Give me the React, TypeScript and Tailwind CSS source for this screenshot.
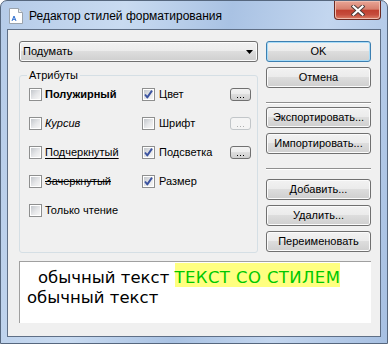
import React from 'react';

const btnBg = 'bg-[linear-gradient(to_bottom,#f2f2f2_0%,#ebebeb_49%,#dddddd_50%,#cfcfcf_100%)]';

function Button({ label, isDefault = false, className = '' }: { label: string; isDefault?: boolean; className?: string }) {
  return (
    <div
      className={`flex h-[21px] items-center justify-center rounded-[3px] border text-[11px] leading-none text-black ${btnBg} ${
        isDefault ? 'border-[#3c7fb1] shadow-[inset_0_0_0_1px_#a8dcf8]' : 'border-[#707070] shadow-[inset_0_0_0_1px_#fbfbfb]'
      } ${className}`}
    >
      {label}
    </div>
  );
}

function DotsButton({ disabled = false }: { disabled?: boolean }) {
  return (
    <div
      className={`flex h-[13px] w-[21px] items-end justify-center rounded-[3px] border pb-[2px] ${
        disabled ? 'border-[#c2c6c9] bg-[#f4f4f4]' : `border-[#707070] ${btnBg}`
      }`}
    >
      <div className="flex gap-[2px]">
        {[0, 1, 2].map((i) => (
          <span key={i} className={`h-[1px] w-[1px] ${disabled ? 'bg-[#b0b0b0]' : 'bg-black'}`} />
        ))}
      </div>
    </div>
  );
}

function CheckBox({ checked = false }: { checked?: boolean }) {
  return (
    <span className="relative flex h-[13px] w-[13px] flex-none border border-[#8e8f8f] bg-white p-[1px]">
      <span className="block h-full w-full bg-[linear-gradient(135deg,#c3c7cc_0%,#e6e7e9_55%,#f6f6f6_100%)]" />
      {checked && (
        <svg className="absolute left-0 top-0" width="11" height="11" viewBox="0 0 11 11">
          <path d="M2 5.5 L4.3 8.4 L9 1.6" fill="none" stroke="#3b53a0" strokeWidth="1.9" strokeLinejoin="round" />
        </svg>
      )}
    </span>
  );
}

const leftItems = [
  { label: 'Полужирный', cls: 'font-bold' },
  { label: 'Курсив', cls: 'italic' },
  { label: 'Подчеркнутый', cls: 'underline underline-offset-2' },
  { label: 'Зачеркнутый', cls: 'line-through' },
  { label: 'Только чтение', cls: '' },
];

const rightItems: ({ label: string; checked: boolean; dots?: 'on' | 'off' } | null)[] = [
  { label: 'Цвет', checked: true, dots: 'on' },
  { label: 'Шрифт', checked: false, dots: 'off' },
  { label: 'Подсветка', checked: true, dots: 'on' },
  { label: 'Размер', checked: true },
  null,
];

function TitleIcon() {
  return (
    <svg width="14" height="16" viewBox="0 0 14 16">
      <path d="M0.5 0.5 H9.5 L13.5 4.5 V15.5 H0.5 Z" fill="#ffffff" stroke="#9aa3ad" />
      <path d="M9.5 0.5 V4.5 H13.5" fill="#e8ecf0" stroke="#9aa3ad" />
      <path d="M3 13 L5 8 L7 13 M3.8 11.3 H6.2" fill="none" stroke="#2f6fd0" strokeWidth="1" />
    </svg>
  );
}

function CloseButton() {
  return (
    <div className="flex h-[19px] w-[47px] items-center justify-center self-start rounded-b-[4px] border border-t-0 border-[#6b2a22] bg-[linear-gradient(to_bottom,#e9a596_0%,#d7806e_45%,#c0402f_52%,#c54c3c_75%,#dc8068_100%)] shadow-[inset_0_0_0_1px_#efbcae]">
      <svg width="14" height="11" viewBox="0 0 14 11">
        <path d="M2.5 1.5 L11.5 9.5 M11.5 1.5 L2.5 9.5" stroke="#4a3a38" strokeWidth="4" strokeLinecap="square" />
        <path d="M2.5 1.5 L11.5 9.5 M11.5 1.5 L2.5 9.5" stroke="#ffffff" strokeWidth="2.2" strokeLinecap="square" />
      </svg>
    </div>
  );
}

export default function App() {
  return (
    <div className="h-[344px] w-[388px] bg-white">
      <div className="flex h-[344px] w-[388px] flex-col rounded-t-[7px] border border-[#56677e] bg-[linear-gradient(100deg,#b5cbe8_0%,#c9dbf1_28%,#a9c2e3_52%,#c3d6ef_74%,#a7c0e2_100%)] px-[6px] pb-[6px] font-['Liberation_Sans',Arial,sans-serif]">
        {/* Title bar */}
        <div className="flex h-[28px] pl-[2px]">
          <div className="flex items-center gap-[6px] self-center pt-[1px]">
            <TitleIcon />
            <span className="text-[12px] text-black">Редактор стилей форматирования</span>
          </div>
          <div className="ml-auto flex">
            <CloseButton />
          </div>
        </div>

        {/* Client area */}
        <div className="flex h-[308px] flex-col border border-[#5f6f86] bg-[#f0f0f0] pl-[11px] pr-[9px] pt-[11px] text-[11px] text-black">
          <div className="flex gap-[8px]">
            {/* Left column */}
            <div className="flex w-[239px] flex-col">
              <div className={`flex h-[21px] items-center justify-between rounded-[3px] border border-[#707070] pl-[3px] pr-[4px] shadow-[inset_0_0_0_1px_#fbfbfb] ${btnBg}`}>
                <span>Подумать</span>
                <svg width="7" height="4" viewBox="0 0 7 4">
                  <path d="M0 0 H7 L3.5 4 Z" fill="#000000" />
                </svg>
              </div>

              <div className="relative mt-[13px] h-[178px] rounded-[3px] border border-[#d5dfe5] pl-[9px] pt-[4px]">
                <span className="absolute left-[7px] top-[-8px] bg-[#f0f0f0] px-[2px] leading-[14px]">Атрибуты</span>
                <div className="grid grid-cols-[113px_88px_21px]">
                  {leftItems.map((item, i) => {
                    const r = rightItems[i];
                    return (
                      <React.Fragment key={item.label}>
                        <div className="flex h-[29px] items-center gap-[3px]">
                          <CheckBox />
                          <span className={item.cls}>{item.label}</span>
                        </div>
                        <div className="flex h-[29px] items-center gap-[4px]">
                          {r && (
                            <>
                              <CheckBox checked={r.checked} />
                              <span>{r.label}</span>
                            </>
                          )}
                        </div>
                        <div className="flex h-[29px] items-center">
                          {r?.dots && <DotsButton disabled={r.dots === 'off'} />}
                        </div>
                      </React.Fragment>
                    );
                  })}
                </div>
              </div>
            </div>

            {/* Right column */}
            <div className="flex w-[105px] flex-col">
              <Button label="OK" isDefault />
              <Button label="Отмена" className="mt-[5px]" />
              <div className="mt-[14px] h-[2px] border-b border-t border-b-white border-t-[#8f8f8f]" />
              <Button label="Экспортировать..." className="mt-[3px]" />
              <Button label="Импортировать..." className="mt-[5px]" />
              <div className="mt-[14px] h-[2px] border-b border-t border-b-white border-t-[#8f8f8f]" />
              <Button label="Добавить..." className="mt-[9px]" />
              <Button label="Удалить..." className="mt-[5px]" />
              <Button label="Переименовать" className="mt-[5px]" />
            </div>
          </div>

          {/* Preview */}
          <div className="mt-[8px] h-[62px] w-[352px] border-l border-t border-[#a0a0a0] bg-white pl-[7px] pt-[6px] font-['DejaVu_Sans',Verdana,sans-serif] text-[16.5px] leading-[20px] text-black">
            <div className="indent-[11px]">
              обычный текст <span className="bg-[#ffff80] pt-[5px] tracking-[0.4px] text-[#00c800]">ТЕКСТ СО СТИЛЕМ</span>
            </div>
            <div>обычный текст</div>
          </div>
        </div>
      </div>
    </div>
  );
}
